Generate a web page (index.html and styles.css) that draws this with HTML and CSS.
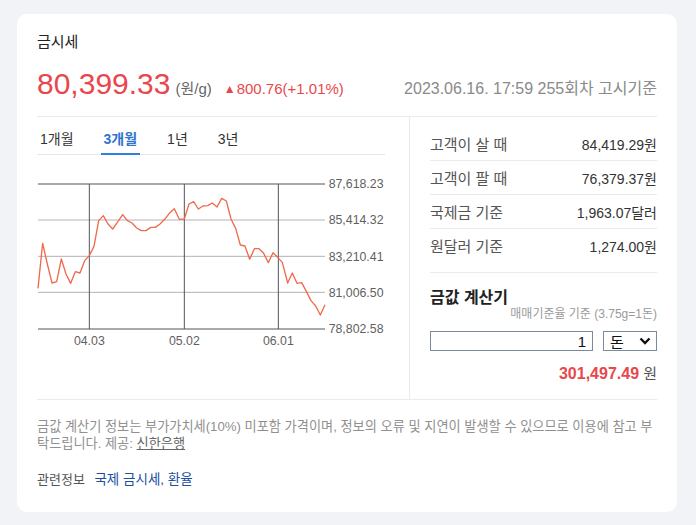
FILE: index.html
```html
<!DOCTYPE html>
<html lang="ko">
<head>
    <meta charset="UTF-8">
    <meta name="viewport" content="width=device-width, initial-scale=1.0">
    <title>금시세</title>
    <link rel="stylesheet" href="styles.css">
</head>
<body>
    <div class="card">
        <h2 class="title">금시세</h2>
        <div class="price-row">
            <span class="price">80,399.33</span>
            <span class="unit">(원/g)</span>
            <span class="change"><span class="arrow">▲</span>800.76(+1.01%)</span>
            <span class="date">2023.06.16. 17:59 255회차 고시기준</span>
        </div>

        <div class="main">
            <div class="left">
                <div class="tabs">
                    <span class="tab">1개월</span>
                    <span class="tab active">3개월</span>
                    <span class="tab">1년</span>
                    <span class="tab">3년</span>
                </div>
                <svg class="chart" width="350" height="180" viewBox="51 30 1050 540">
                    <line x1="54" y1="183" x2="915" y2="183" class="grid-light"/>
                    <line x1="54" y1="292" x2="915" y2="292" class="grid-light"/>
                    <line x1="54" y1="400" x2="915" y2="400" class="grid-light"/>
                    <line x1="54" y1="75" x2="915" y2="75" class="grid-dark"/>
                    <line x1="54" y1="510" x2="915" y2="510" class="grid-dark"/>
                    <line x1="208" y1="75" x2="208" y2="510" class="grid-dark"/>
                    <line x1="493" y1="75" x2="493" y2="510" class="grid-dark"/>
                    <line x1="775" y1="75" x2="775" y2="510" class="grid-dark"/>
                    <polyline class="line" points="54,388 68,253 82,315 96,372 110,368 124,300 138,345 152,373 166,338 180,342 194,305 208,290 222,262 236,185 250,170 264,195 278,210 292,190 308,167 322,185 336,192 350,207 364,215 378,215 392,205 406,205 420,195 434,181 448,163 463,149 478,181 493,180 507,135 521,128 535,150 549,141 563,140 577,132 591,144 605,118 619,126 633,180 647,208 661,258 675,261 689,301 703,269 717,269 731,283 745,311 759,281 773,295 787,310 803,372 817,342 831,373 845,371 859,397 873,425 887,441 901,468 915,437"/>
                    <text x="926" y="88" class="ylabel">87,618.23</text>
                    <text x="926" y="196" class="ylabel">85,414.32</text>
                    <text x="926" y="305" class="ylabel">83,210.41</text>
                    <text x="926" y="413" class="ylabel">81,006.50</text>
                    <text x="926" y="523" class="ylabel">78,802.58</text>
                    <text x="208" y="557" class="xlabel">04.03</text>
                    <text x="493" y="557" class="xlabel">05.02</text>
                    <text x="775" y="557" class="xlabel">06.01</text>
                </svg>
            </div>

            <div class="right">
                <div class="row"><span class="label">고객이 살 때</span><span class="value">84,419.29원</span></div>
                <div class="row"><span class="label">고객이 팔 때</span><span class="value">76,379.37원</span></div>
                <div class="row"><span class="label">국제금 기준</span><span class="value">1,963.07달러</span></div>
                <div class="row last"><span class="label">원달러 기준</span><span class="value">1,274.00원</span></div>

                <div class="calc">
                    <h3>금값 계산기</h3>
                    <p class="calc-sub">매매기준율 기준 (3.75g=1돈)</p>
                    <div class="calc-inputs">
                        <input type="text" class="amount" value="1">
                        <div class="select">
                            <span>돈</span>
                            <svg width="12" height="8" viewBox="0 0 12 8"><path d="M1.5 1.5 L6 6 L10.5 1.5" fill="none" stroke="#111" stroke-width="2.4"/></svg>
                        </div>
                    </div>
                    <p class="calc-result"><strong>301,497.49</strong> 원</p>
                </div>
            </div>
        </div>

        <p class="note">금값 계산기 정보는 부가가치세(10%) 미포함 가격이며, 정보의 오류 및 지연이 발생할 수 있으므로 이용에 참고 부탁드립니다. 제공: <a href="#">신한은행</a></p>
        <p class="related">관련정보 <a href="#">국제 금시세, 환율</a></p>
    </div>
</body>
</html>
```

FILE: styles.css
```css
body {
    margin: 0;
    padding: 14px 17px;
    background-color: #f1f3f6;
    font-family: "Liberation Sans", "Noto Sans CJK KR", sans-serif;
    color: #333;
}
.card {
    background: white;
    width: 660px;
    height: 498px;
    box-sizing: border-box;
    border-radius: 10px;
    padding: 18px 20px 0;
}
.title {
    margin: 0;
    font-size: 15px;
    line-height: 20px;
    font-weight: normal;
    color: #222;
}
.price-row {
    display: flex;
    align-items: baseline;
    height: 36px;
    margin-top: 14px;
    padding-bottom: 14px;
    border-bottom: 1px solid #ebebeb;
    line-height: 36px;
}
.price {
    font-size: 30px;
    color: #e8484d;
}
.unit {
    font-size: 15px;
    color: #666;
    margin-left: 5px;
}
.change {
    font-size: 15px;
    color: #e8484d;
    margin-left: 12px;
}
.arrow {
    font-size: 12px;
    margin-right: 1px;
    position: relative;
    top: -1px;
}
.date {
    margin-left: auto;
    font-size: 16px;
    color: #8a8a8a;
}
.main {
    display: flex;
    height: 283px;
    box-sizing: border-box;
    border-bottom: 1px solid #ebebeb;
}
.left {
    width: 372px;
    border-right: 1px solid #ebebeb;
}
.tabs {
    display: flex;
    gap: 24px;
    margin-right: 24px;
    border-bottom: 1px solid #e6e6e6;
}
.tab {
    font-size: 14px;
    line-height: 20px;
    padding: 12px 3px 4px;
    border-bottom: 2px solid transparent;
    margin-bottom: -1px;
    color: #333;
}
.tab.active {
    color: #2f74d0;
    font-weight: bold;
    border-bottom-color: #2f7fe0;
}
.chart {
    display: block;
    margin-top: 14px;
}
.grid-light {
    stroke: #b4b4b4;
    stroke-width: 3;
}
.grid-dark {
    stroke: #555;
    stroke-width: 3;
}
.line {
    fill: none;
    stroke: #ee6b4d;
    stroke-width: 4;
    stroke-linejoin: round;
}
.ylabel, .xlabel {
    font-family: "Liberation Sans", sans-serif;
    font-size: 37px;
    fill: #5f5f5f;
}
.xlabel {
    text-anchor: middle;
}
.right {
    flex: 1;
    padding: 10px 0 0 20px;
}
.row {
    display: flex;
    justify-content: space-between;
    align-items: center;
    height: 33px;
    border-bottom: 1px solid #ebebeb;
}
.row.last {
    border-bottom: none;
}
.label {
    font-size: 15px;
    color: #555;
}
.value {
    font-size: 14px;
    color: #333;
}
.calc {
    margin-top: 10px;
    border-top: 1px solid #ebebeb;
    padding-top: 14px;
}
.calc h3 {
    margin: 0;
    font-size: 16px;
    line-height: 22px;
    color: #222;
}
.calc-sub {
    margin: -3px 0 0;
    text-align: right;
    font-size: 12px;
    line-height: 16px;
    color: #9a9a9a;
}
.calc-inputs {
    display: flex;
    gap: 10px;
    margin-top: 9px;
}
.amount {
    width: 163px;
    height: 20px;
    box-sizing: border-box;
    border: 1px solid #7b8b9b;
    padding: 0 6px;
    text-align: right;
    font-size: 15px;
    font-family: inherit;
    color: #111;
}
.select {
    width: 54px;
    height: 20px;
    box-sizing: border-box;
    border: 1px solid #7b8b9b;
    display: flex;
    align-items: center;
    justify-content: space-between;
    padding: 0 5px 0 6px;
    font-size: 15px;
    color: #111;
}
.calc-result {
    margin: 12px 0 0;
    text-align: right;
    font-size: 15px;
    line-height: 22px;
    color: #555;
}
.calc-result strong {
    font-size: 16px;
    color: #e8484d;
}
.note {
    margin: 18px 0 0;
    font-size: 13.2px;
    line-height: 17px;
    color: #909090;
}
.note a {
    color: #666;
}
.related {
    margin: 18px 0 0;
    font-size: 13px;
    line-height: 20px;
    color: #555;
}
.related a {
    color: #1d4f9e;
    text-decoration: none;
    margin-left: 6px;
    font-size: 13.5px;
}
```
